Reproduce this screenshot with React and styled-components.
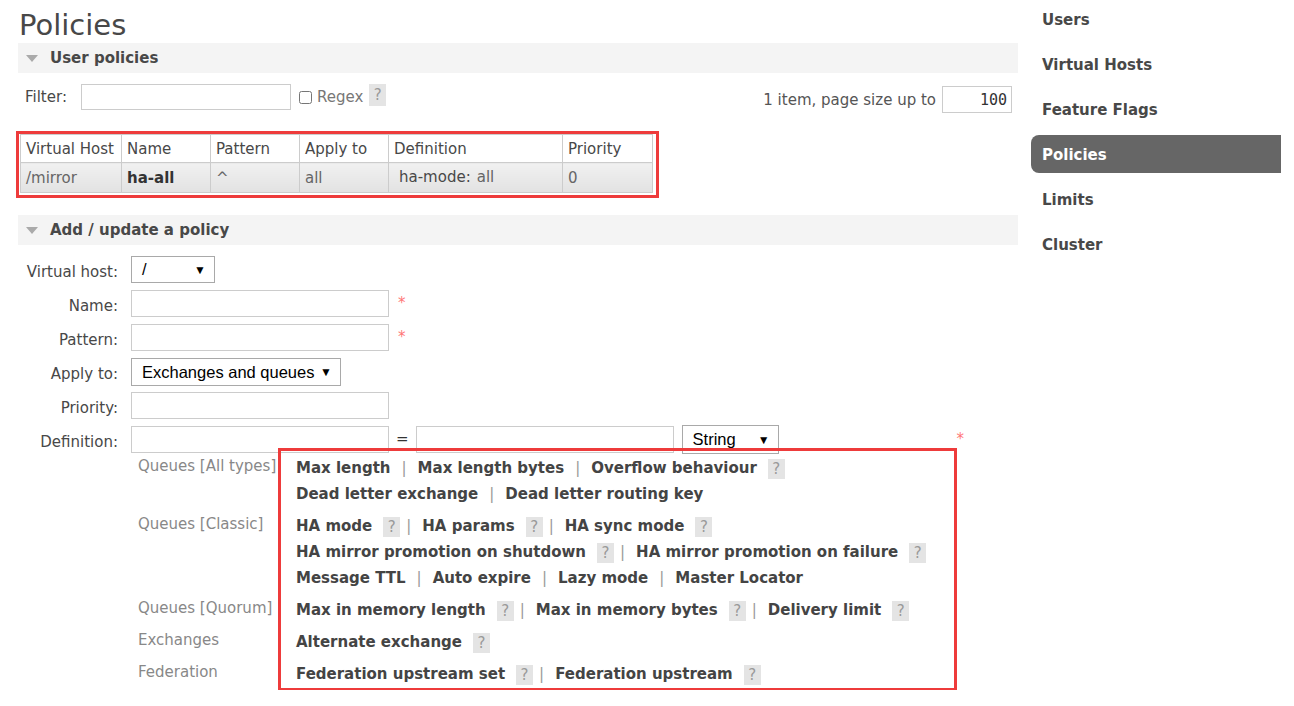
import React from 'react'
import styled, { createGlobalStyle } from 'styled-components';

const GlobalStyle = createGlobalStyle`
    body {
        margin: 0;
        background: #fff;
        font-family: "DejaVu Sans", Verdana, sans-serif;
        font-size: 15px;
        color: #484848;
    }
`;

const Page = styled.div`
    display: flex;
    align-items: flex-start;
`;

const Main = styled.div`
    width: 1000px;
    margin-left: 18px;
`;

const Title = styled.h1`
    margin: 8px 0 0 1px;
    font-size: 29px;
    line-height: 35px;
    font-weight: normal;
    color: #484848;
`;

const SectionBar = styled.div`
    display: flex;
    align-items: center;
    height: 30px;
    margin-top: ${p => p.$top || 0}px;
    padding-left: 8px;
    background: #f4f4f4;
    font-weight: bold;
`;

const Triangle = styled.span`
    width: 0;
    height: 0;
    border-left: 6px solid transparent;
    border-right: 6px solid transparent;
    border-top: 7px solid #aaa;
    margin-right: 12px;
`;

const FilterRow = styled.div`
    display: flex;
    align-items: flex-start;
    margin-top: 11px;
    padding: 0 6px 0 7px;
    line-height: 27px;
`;

const TextInput = styled.input`
    box-sizing: border-box;
    width: ${p => p.$w || 258}px;
    height: ${p => p.$h || 27}px;
    margin: 0 0 0 ${p => p.$ml || 0}px;
    border: 1px solid #ccc;
    padding: 0 4px;
    font-family: "DejaVu Sans Mono", monospace;
    font-size: 15px;
    color: #333;
    text-align: ${p => p.$align || 'left'};
    outline: none;
`;

const Check = styled.input`
    width: 13px;
    height: 13px;
    margin: 7px 0 0 8px;
`;

const Muted = styled.span`
    color: #777;
    margin-left: ${p => p.$ml || 0}px;
`;

const Help = styled.span`
    display: inline-block;
    width: 17px;
    height: ${p => p.$h || 20}px;
    line-height: ${p => p.$h || 20}px;
    margin-left: ${p => p.$ml || 11}px;
    background: #e4e4e4;
    color: #999;
    font-weight: normal;
    text-align: center;
    vertical-align: middle;
`;

const Paging = styled.div`
    margin-left: auto;
    display: flex;
    align-items: flex-start;
    color: #555;
    span { margin-top: 3px; }
`;

const TableFrame = styled.div`
    width: fit-content;
    margin: 17px 0 0 -2px;
    border: 3px solid #ee3b3b;
    padding: 0 3px 2px 1px;
`;

const Table = styled.table`
    width: 632px;
    border-collapse: collapse;
    table-layout: fixed;
`;

const Th = styled.th`
    box-sizing: border-box;
    width: ${p => p.$w}px;
    height: 28px;
    padding: 0 5px;
    border: 1px solid #ccc;
    background: #fff;
    font-weight: normal;
    text-align: left;
    color: #484848;
`;

const Td = styled.td`
    height: 29px;
    padding: 0 5px;
    border: 1px solid #ccc;
    background: linear-gradient(#f1f1f1, #e2e2e2);
    color: ${p => p.$strong ? '#333' : '#666'};
    font-weight: ${p => p.$strong ? 'bold' : 'normal'};
`;

const Raised = styled.span`
    margin-left: 5px;
    vertical-align: 2px;
`;

const Key = styled.span`
    color: #484848;
    margin-right: 6px;
`;

const Form = styled.div`
    display: grid;
    grid-template-columns: 100px 1fr;
    column-gap: 13px;
    row-gap: 7px;
    margin-top: 11px;
`;

const Label = styled.label`
    text-align: right;
    line-height: 22px;
    padding-top: 5px;
`;

const Field = styled.div`
    display: flex;
    align-items: flex-start;
`;

const Select = styled.div`
    box-sizing: border-box;
    display: flex;
    align-items: center;
    justify-content: space-between;
    width: ${p => p.$w}px;
    height: ${p => p.$h || 27}px;
    margin: ${p => p.$mt || 0}px 0 ${p => p.$mb || 0}px ${p => p.$ml || 0}px;
    padding: 0 8px 0 10px;
    border: 1px solid #a9a9a9;
    background: #fff;
    font-family: "Liberation Sans", Arial, sans-serif;
    font-size: 16.5px;
    color: #000;
`;

const Arrow = styled.span`
    font-size: 12px;
`;

const Mand = styled.span`
    margin-left: ${p => p.$ml || 9}px;
    padding-top: 6px;
    line-height: 1;
    color: #f77;
`;

const Equals = styled.span`
    margin: 0 7px;
    line-height: 27px;
    color: #333;
`;

const Categories = styled.div`
    grid-column: 2;
    display: grid;
    grid-template-columns: 147px 679px;
    grid-template-rows: repeat(5, auto);
    margin-top: -8px;

    &::after {
        content: "";
        grid-column: 2;
        grid-row: 1 / 6;
        margin: -4px 0 -1px;
        border: 3px solid #ee3b3b;
        pointer-events: none;
    }
`;

const CatLabel = styled.div`
    grid-column: 1;
    grid-row: ${p => p.$row};
    padding: 1px 0 0 7px;
    line-height: 26px;
    color: #888;
`;

const CatLinks = styled.div`
    grid-column: 2;
    grid-row: ${p => p.$row};
    padding: 3px 0 3px 18px;
    line-height: 26px;
`;

const Arg = styled.span`
    font-weight: bold;
    color: #444;
`;

const Sep = styled.span`
    color: #999;
    margin: 0 11px 0 ${p => p.$afterHelp ? 6 : 11}px;
`;

const Sidebar = styled.nav`
    width: 250px;
    margin-left: 13px;
`;

const NavItem = styled.div`
    height: 38px;
    line-height: 41px;
    margin-bottom: 7px;
    padding-left: 11px;
    border-radius: 8px 0 0 8px;
    font-weight: bold;
    color: ${p => p.$active ? '#fff' : '#484848'};
    background: ${p => p.$active ? '#666' : 'transparent'};
`;

const categories = [
    {
        label: 'Queues [All types]',
        lines: [
            [['Max length'], ['Max length bytes'], ['Overflow behaviour', true]],
            [['Dead letter exchange'], ['Dead letter routing key']],
        ],
    },
    {
        label: 'Queues [Classic]',
        lines: [
            [['HA mode', true], ['HA params', true], ['HA sync mode', true]],
            [['HA mirror promotion on shutdown', true], ['HA mirror promotion on failure', true]],
            [['Message TTL'], ['Auto expire'], ['Lazy mode'], ['Master Locator']],
        ],
    },
    {
        label: 'Queues [Quorum]',
        lines: [
            [['Max in memory length', true], ['Max in memory bytes', true], ['Delivery limit', true]],
        ],
    },
    {
        label: 'Exchanges',
        lines: [[['Alternate exchange', true]]],
    },
    {
        label: 'Federation',
        lines: [[['Federation upstream set', true], ['Federation upstream', true]]],
    },
];

const navItems = ['Users', 'Virtual Hosts', 'Feature Flags', 'Policies', 'Limits', 'Cluster'];

const ArgLine = ({ items }) => (
    <div>
        {items.map(([name, help], i) => (
            <React.Fragment key={name}>
                {i > 0 && <Sep $afterHelp={items[i - 1][1]}>|</Sep>}
                <Arg>{name}</Arg>
                {help && <Help>?</Help>}
            </React.Fragment>
        ))}
    </div>
);

const App = () => {
    return (
        <Page>
            <GlobalStyle />
            <Main>
                <Title>Policies</Title>
                <SectionBar><Triangle />User policies</SectionBar>
                <FilterRow>
                    <span>Filter:</span>
                    <TextInput $w={210} $h={26} $ml={14} />
                    <Check type="checkbox" />
                    <Muted $ml={5}>Regex</Muted>
                    <Help $h={22} $ml={6}>?</Help>
                    <Paging>
                        <span>1 item, page size up to</span>
                        <TextInput $w={70} $ml={6} $align="right" defaultValue="100" style={{ marginTop: 2 }} />
                    </Paging>
                </FilterRow>
                <TableFrame>
                    <Table>
                        <thead>
                            <tr>
                                <Th $w={101}>Virtual Host</Th>
                                <Th $w={89}>Name</Th>
                                <Th $w={89}>Pattern</Th>
                                <Th $w={89}>Apply to</Th>
                                <Th $w={174}>Definition</Th>
                                <Th $w={90}>Priority</Th>
                            </tr>
                        </thead>
                        <tbody>
                            <tr>
                                <Td>/mirror</Td>
                                <Td $strong>ha-all</Td>
                                <Td>^</Td>
                                <Td>all</Td>
                                <Td><Raised><Key>ha-mode:</Key>all</Raised></Td>
                                <Td>0</Td>
                            </tr>
                        </tbody>
                    </Table>
                </TableFrame>
                <SectionBar $top={17}><Triangle />Add / update a policy</SectionBar>
                <Form>
                    <Label>Virtual host:</Label>
                    <Field><Select $w={84} $mb={-1}><span>/</span><Arrow>▼</Arrow></Select></Field>
                    <Label>Name:</Label>
                    <Field><TextInput /><Mand>*</Mand></Field>
                    <Label>Pattern:</Label>
                    <Field><TextInput /><Mand>*</Mand></Field>
                    <Label>Apply to:</Label>
                    <Field><Select $w={210} $h={28} $mb={-1}><span>Exchanges and queues</span><Arrow>▼</Arrow></Select></Field>
                    <Label>Priority:</Label>
                    <Field><TextInput /></Field>
                    <Label>Definition:</Label>
                    <Field>
                        <TextInput />
                        <Equals>=</Equals>
                        <TextInput />
                        <Select $w={97} $h={29} $ml={8} $mt={-1} $mb={-1}><span>String</span><Arrow>▼</Arrow></Select>
                        <Mand $ml={178}>*</Mand>
                    </Field>
                    <Categories>
                        {categories.map((cat, idx) => (
                            <React.Fragment key={cat.label}>
                                <CatLabel $row={idx + 1}>{cat.label}</CatLabel>
                                <CatLinks $row={idx + 1}>
                                    {cat.lines.map((line, i) => <ArgLine key={i} items={line} />)}
                                </CatLinks>
                            </React.Fragment>
                        ))}
                    </Categories>
                </Form>
            </Main>
            <Sidebar>
                {navItems.map(item => (
                    <NavItem key={item} $active={item === 'Policies'}>{item}</NavItem>
                ))}
            </Sidebar>
        </Page>
    )
}

export default App
